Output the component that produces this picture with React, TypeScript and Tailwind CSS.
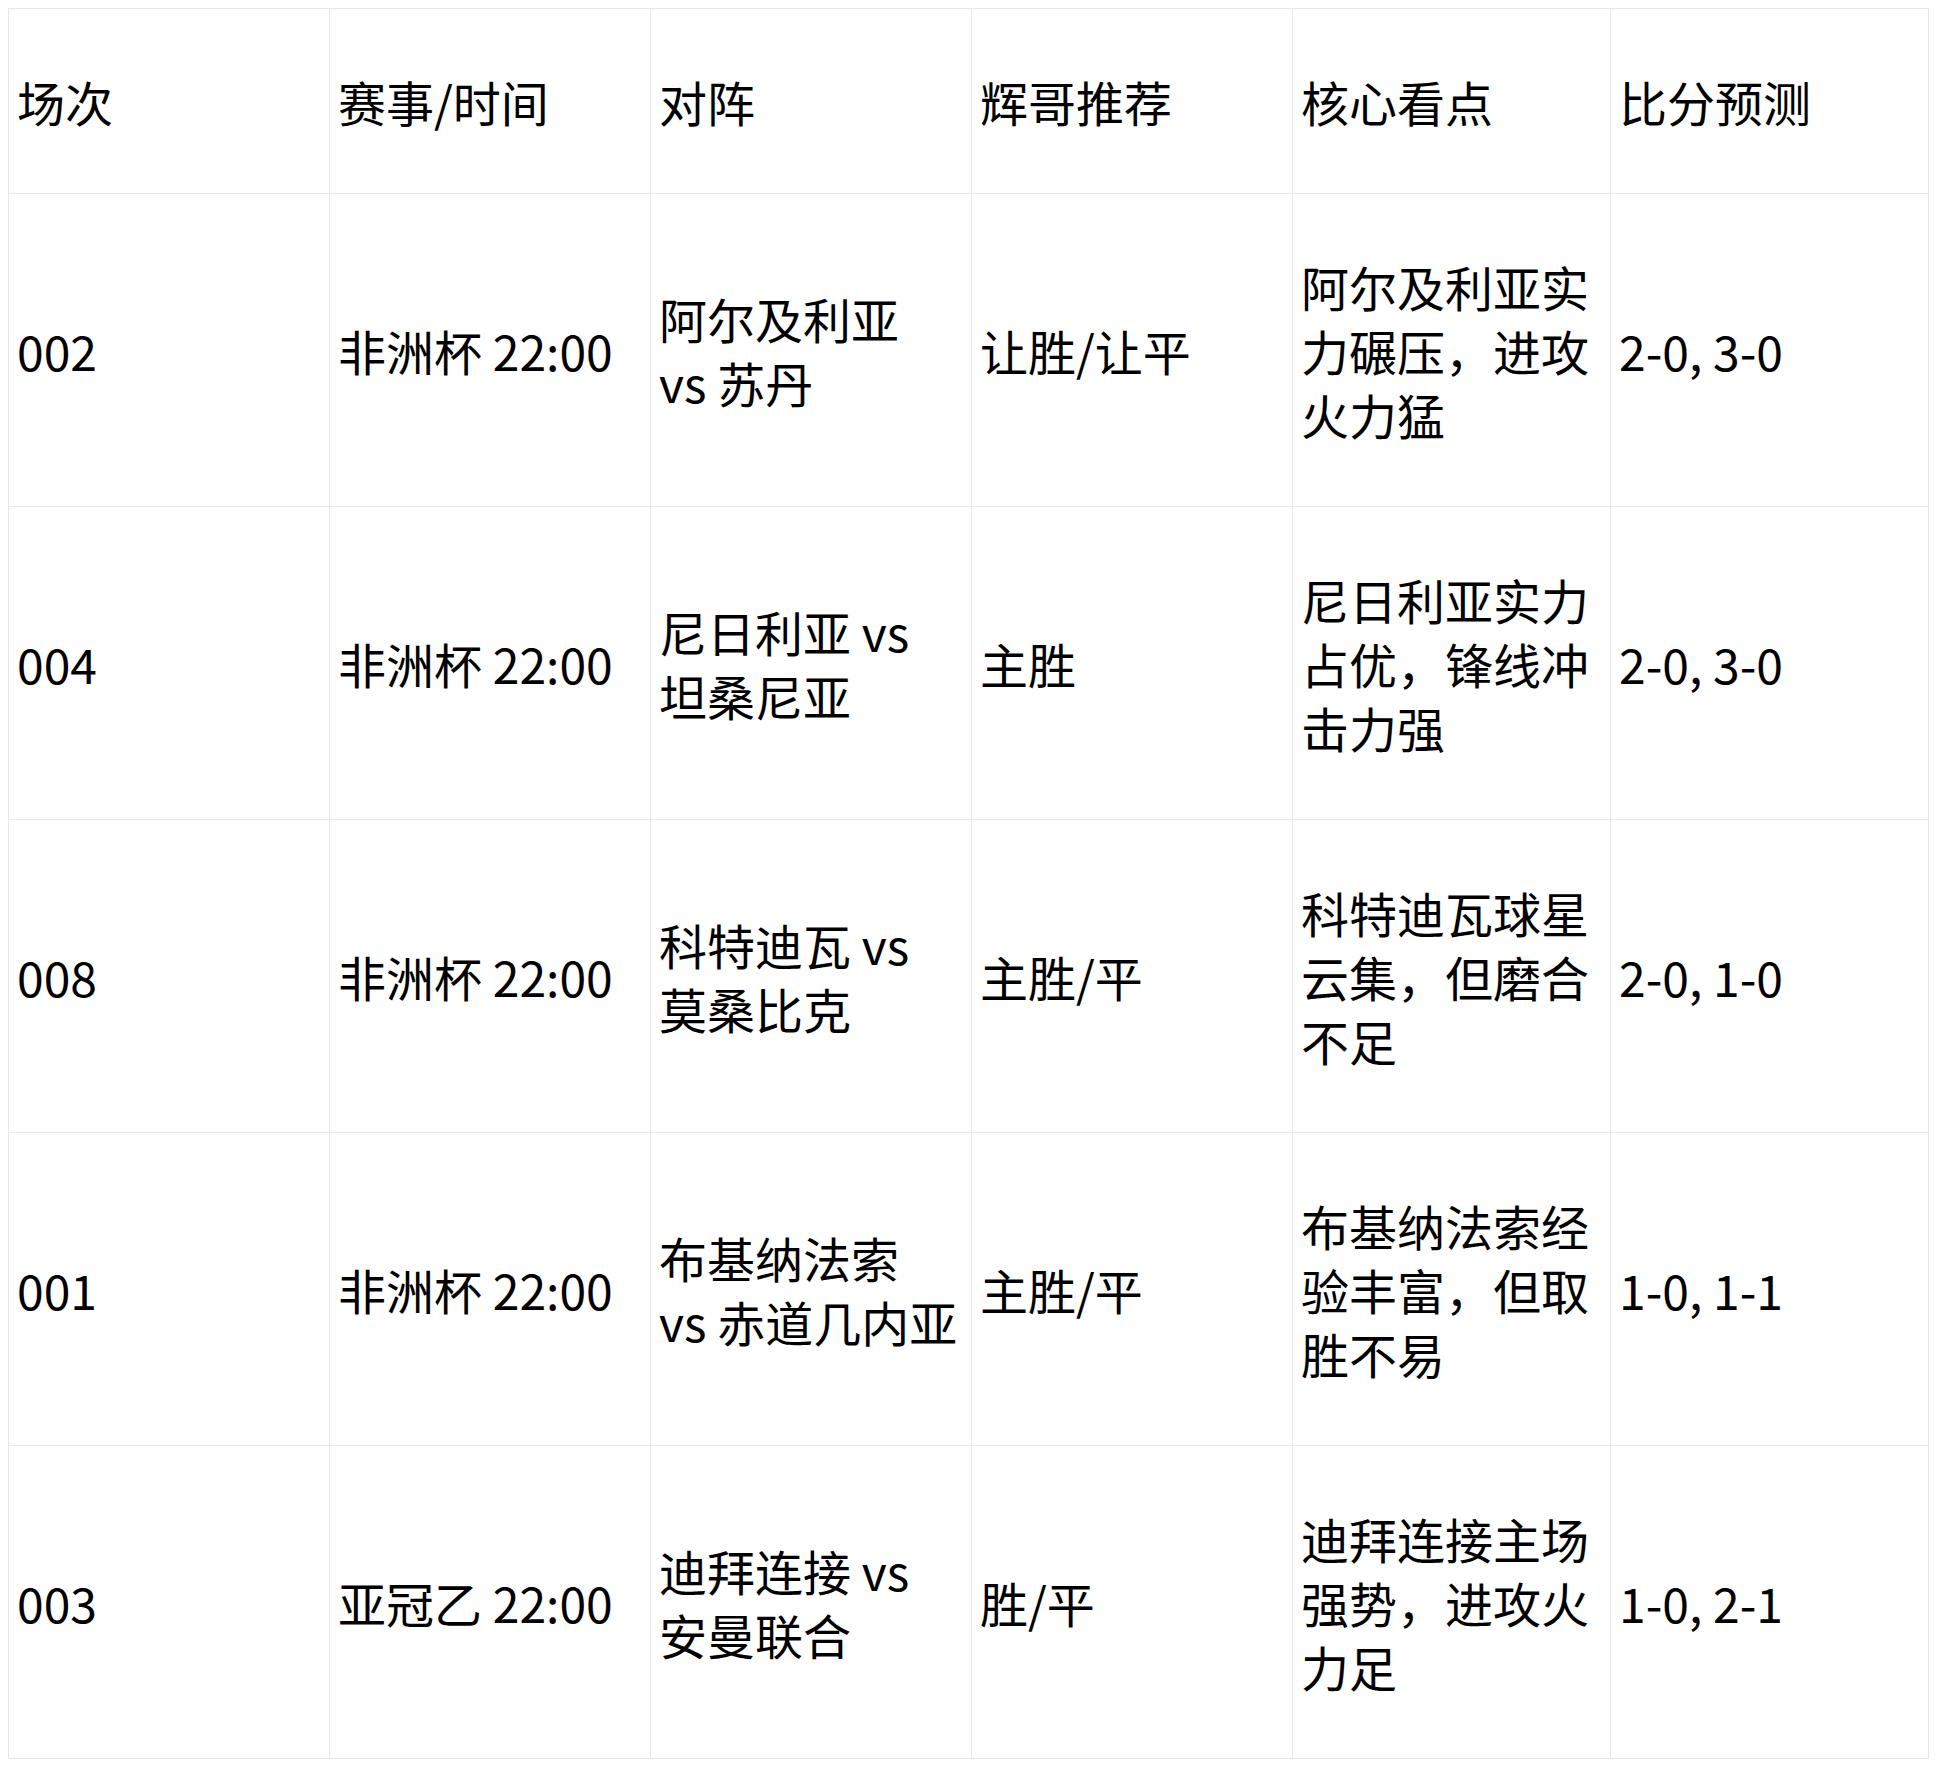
import React from "react";

type Row = {
  no: string;
  match: string;
  teams: string[];
  pick: string;
  notes: string[];
  score: string;
};

const rows: Row[] = [
  {
    no: "002",
    match: "非洲杯 22:00",
    teams: ["阿尔及利亚", "vs 苏丹"],
    pick: "让胜/让平",
    notes: ["阿尔及利亚实", "力碾压，进攻", "火力猛"],
    score: "2-0, 3-0",
  },
  {
    no: "004",
    match: "非洲杯 22:00",
    teams: ["尼日利亚 vs", "坦桑尼亚"],
    pick: "主胜",
    notes: ["尼日利亚实力", "占优，锋线冲", "击力强"],
    score: "2-0, 3-0",
  },
  {
    no: "008",
    match: "非洲杯 22:00",
    teams: ["科特迪瓦 vs", "莫桑比克"],
    pick: "主胜/平",
    notes: ["科特迪瓦球星", "云集，但磨合", "不足"],
    score: "2-0, 1-0",
  },
  {
    no: "001",
    match: "非洲杯 22:00",
    teams: ["布基纳法索", "vs 赤道几内亚"],
    pick: "主胜/平",
    notes: ["布基纳法索经", "验丰富，但取", "胜不易"],
    score: "1-0, 1-1",
  },
  {
    no: "003",
    match: "亚冠乙 22:00",
    teams: ["迪拜连接 vs", "安曼联合"],
    pick: "胜/平",
    notes: ["迪拜连接主场", "强势，进攻火", "力足"],
    score: "1-0, 2-1",
  },
];

const cell =
  "border border-[#e5e7eb] pl-[8px] pr-[10px] py-[60px] align-middle text-left font-normal whitespace-nowrap";

function Lines({ lines }: { lines: string[] }) {
  return (
    <>
      {lines.map((l, i) => (
        <React.Fragment key={i}>
          {i > 0 && <br />}
          {l}
        </React.Fragment>
      ))}
    </>
  );
}

export default function App() {
  return (
    <div
      className="bg-white p-2 text-black text-[48px] leading-[64px]"
      style={{ fontFamily: '"Noto Sans CJK SC", "Noto Sans", sans-serif' }}
    >
      <table className="w-[1920px] table-fixed border-collapse">
        <colgroup>
          <col className="w-[321px]" />
          <col className="w-[321px]" />
          <col className="w-[321px]" />
          <col className="w-[321px]" />
          <col className="w-[318px]" />
          <col className="w-[318px]" />
        </colgroup>
        <thead>
          <tr>
            <th className={cell}>场次</th>
            <th className={cell}>赛事/时间</th>
            <th className={cell}>对阵</th>
            <th className={cell}>辉哥推荐</th>
            <th className={cell}>核心看点</th>
            <th className={cell}>比分预测</th>
          </tr>
        </thead>
        <tbody>
          {rows.map((r) => (
            <tr key={r.no}>
              <td className={cell}>{r.no}</td>
              <td className={cell}>{r.match}</td>
              <td className={cell}>
                <Lines lines={r.teams} />
              </td>
              <td className={cell}>{r.pick}</td>
              <td className={cell}>
                <Lines lines={r.notes} />
              </td>
              <td className={cell}>{r.score}</td>
            </tr>
          ))}
        </tbody>
      </table>
    </div>
  );
}
